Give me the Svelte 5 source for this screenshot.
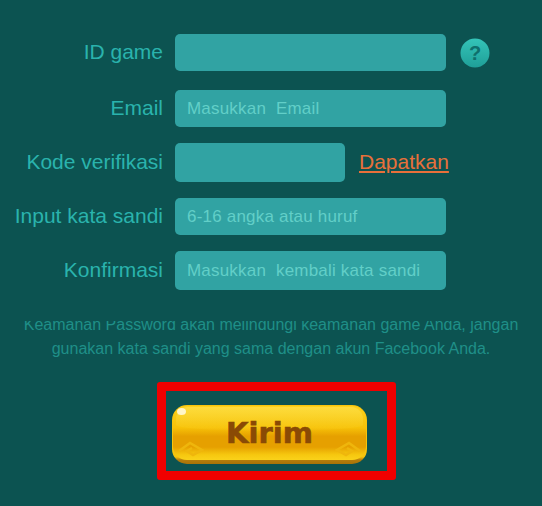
<script>
  const rows = [
    { label: 'ID game', placeholder: '', help: true },
    { label: 'Email', placeholder: 'Masukkan  Email' },
    { label: 'Kode verifikasi', placeholder: '', code: true },
    { label: 'Input kata sandi', placeholder: '6-16 angka atau huruf' },
    { label: 'Konfirmasi', placeholder: 'Masukkan  kembali kata sandi', tall: true }
  ];
</script>

<div class="page">
  <div class="form">
    {#each rows as row}
      <div class="row" class:tall={row.tall || row.code}>
        <span class="label">{row.label}</span>
        <div class="field" class:short={row.code}>{row.placeholder}</div>
        {#if row.help}
          <svg class="help" width="30" height="30" viewBox="0 0 30 30">
            <defs>
              <linearGradient id="helpFill" x1="0" y1="0" x2="0" y2="1">
                <stop offset="0" stop-color="#34c4b8" />
                <stop offset="1" stop-color="#1f9f98" />
              </linearGradient>
            </defs>
            <circle cx="15" cy="15" r="14.5" fill="url(#helpFill)" />
            <text x="15" y="22" text-anchor="middle" class="mark">?</text>
          </svg>
        {/if}
        {#if row.code}
          <span class="get">Dapatkan</span>
        {/if}
      </div>
    {/each}
  </div>

  <p class="note">
    Keamanan Password akan melindungi keamanan game Anda, jangan<br />
    gunakan kata sandi yang sama dengan akun Facebook Anda.
  </p>

  <div class="frame">
    <div class="button">
      <span class="lip"></span>
      <span class="face"></span>
      <span class="shine"></span>
      <span class="dot"></span>
      <svg class="corner left" width="30" height="18" viewBox="0 0 30 18">
        <path d="M2 11 L13 3 L25 10 L16 15 L10 11 L15 8" />
      </svg>
      <svg class="corner right" width="30" height="18" viewBox="0 0 30 18">
        <path d="M28 11 L17 3 L5 10 L14 15 L20 11 L15 8" />
      </svg>
      <span class="text">Kirim</span>
    </div>
  </div>
</div>

<style>
  :global(body) {
    margin: 0;
    background: #0c5351;
  }
  .page {
    width: 542px;
    height: 506px;
    overflow: hidden;
    background: #0c5351;
    font-family: "Liberation Sans", Arial, sans-serif;
  }
  .form {
    display: flex;
    flex-direction: column;
    gap: 16px;
    padding-top: 34px;
  }
  .row {
    display: flex;
    align-items: center;
    height: 37px;
  }
  .row:first-child {
    margin-bottom: 3px;
  }
  .row.tall {
    height: 39px;
  }
  .label {
    width: 163px;
    text-align: right;
    font-size: 21px;
    color: #2ab3ad;
    flex-shrink: 0;
    margin-top: -2px;
  }
  .field {
    width: 271px;
    height: 100%;
    margin-left: 12px;
    padding-left: 12px;
    box-sizing: border-box;
    display: flex;
    align-items: center;
    white-space: pre;
    background: #31a3a3;
    border-radius: 5px;
    font-size: 17px;
    letter-spacing: 0.2px;
    color: #62cfc8;
  }
  .field.short {
    width: 170px;
  }
  .help {
    margin-left: 14px;
    margin-top: 1px;
  }
  .mark {
    font-family: "Liberation Sans", Arial, sans-serif;
    font-weight: 700;
    font-size: 20px;
    fill: #0f6f6c;
  }
  .get {
    margin-left: 14px;
    margin-top: -2px;
    font-size: 21px;
    color: #e8703a;
    text-decoration: underline;
  }
  .note {
    margin: 23px 0 0;
    height: 59px;
    font-size: 16px;
    line-height: 24px;
    text-align: center;
    color: #1f8f88;
    clip-path: inset(8px 0 0 0);
  }
  .frame {
    width: 239px;
    height: 98px;
    margin: 10px 0 0 157px;
    box-sizing: border-box;
    border: 9px solid #f00000;
    border-radius: 3px;
    padding: 14px 0 0 6px;
  }
  .button {
    position: relative;
    width: 195px;
    height: 59px;
    display: flex;
    align-items: center;
    justify-content: center;
  }
  .lip {
    position: absolute;
    inset: 0;
    border-radius: 15px;
    background: linear-gradient(#f7c40d 0%, #f7c40d 88%, #b57d0c 93%, #a87208 100%);
  }
  .face {
    position: absolute;
    inset: 1px 1px 4px;
    border-radius: 14px;
    background: linear-gradient(#fbd21c 0%, #f7c208 40%, #e6a000 56%, #e6a000 76%, #f6c70f 90%, #fad21a 100%);
  }
  .shine {
    position: absolute;
    left: 4px;
    right: 4px;
    top: 2px;
    height: 24px;
    border-radius: 12px 12px 50% 50% / 12px 12px 6px 6px;
    background: linear-gradient(rgba(255, 235, 110, 0.4), rgba(255, 215, 40, 0.05));
  }
  .dot {
    position: absolute;
    left: 5px;
    top: 3px;
    width: 9px;
    height: 7px;
    border-radius: 50%;
    background: #fff6c8;
  }
  .corner {
    position: absolute;
    bottom: 6px;
    fill: none;
    stroke: #efb60c;
    stroke-width: 2.5;
  }
  .corner.left {
    left: 5px;
  }
  .corner.right {
    right: 5px;
  }
  .text {
    position: relative;
    margin-top: -4px;
    font-family: "DejaVu Sans", sans-serif;
    font-weight: 700;
    font-size: 29px;
    color: #8a4a05;
    -webkit-text-stroke: 0.6px #8a4a05;
  }
</style>
